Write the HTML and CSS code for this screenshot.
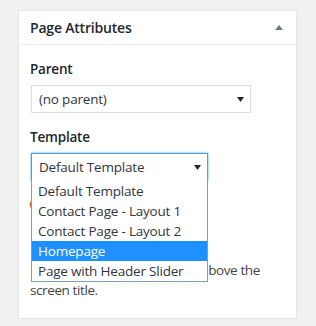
FILE: index.html
```html
<!DOCTYPE html>
<html lang="en">
<head>
    <meta charset="UTF-8">
    <title>Page Attributes</title>
    <link rel="stylesheet" href="styles.css">
</head>
<body>

<div class="postbox">
    <div class="postbox-header">
        <h2>Page Attributes</h2>
        <svg class="toggle" width="8" height="5" viewBox="0 0 8 5"><polygon points="4,0 8,5 0,5" /></svg>
    </div>
    <div class="inside">
        <p class="label">Parent</p>
        <div class="select parent-select">
            <span>(no parent)</span>
            <svg class="arrow" width="7" height="5" viewBox="0 0 7 5"><polygon points="0,0 7,0 3.5,5" /></svg>
        </div>

        <p class="label">Template</p>
        <div class="template-wrap">
            <div class="select template-select focused">
                <span>Default Template</span>
                <svg class="arrow" width="7" height="5" viewBox="0 0 7 5"><polygon points="0,0 7,0 3.5,5" /></svg>
            </div>
            <ul class="dropdown">
                <li>Default Template</li>
                <li>Contact Page - Layout 1</li>
                <li>Contact Page - Layout 2</li>
                <li class="active">Homepage</li>
                <li>Page with Header Slider</li>
            </ul>
        </div>

        <p class="order-label">Order</p>
        <p class="help">Need help? Use the Help tab above the screen title.</p>
    </div>
</div>

</body>
</html>
```

FILE: styles.css
```css
body {
    margin: 0;
    padding: 10px 19px 0 18px;
    background-color: #f1f1f1;
    font-family: "Open Sans", sans-serif;
    font-size: 13px;
    color: #23282d;
}
.postbox {
    background-color: #fff;
    border: 1px solid #e5e5e5;
    box-shadow: 0 1px 1px rgba(0, 0, 0, 0.04);
}
.postbox-header {
    display: flex;
    align-items: center;
    justify-content: space-between;
    height: 33px;
    padding: 0 12px 0 11px;
    border-bottom: 1px solid #eee;
}
.postbox-header h2 {
    margin: 0;
    font-size: 14px;
    font-weight: 600;
    letter-spacing: -0.2px;
}
.toggle {
    fill: #72777c;
    margin-right: 1px;
}
.inside {
    padding: 14px 11px 18px 11px;
}
.label {
    margin: 0;
    height: 20px;
    line-height: 20px;
    font-size: 13.5px;
    font-weight: 600;
    letter-spacing: -0.2px;
}
.select {
    display: flex;
    align-items: center;
    justify-content: space-between;
    box-sizing: border-box;
    height: 28px;
    margin-top: 6px;
    margin-left: 1px;
    padding: 0 6px 0 7px;
    border: 1px solid #ddd;
    font-size: 13.5px;
    color: #32373c;
    letter-spacing: -0.2px;
}
.arrow {
    fill: #23282d;
}
.parent-select {
    width: 220px;
    margin-bottom: 14px;
}
.template-wrap {
    position: relative;
    width: 177px;
    margin-left: 1px;
}
.template-select {
    width: 177px;
    margin-left: 0;
}
.focused {
    border-color: #5b9dd9;
    box-shadow: 0 0 2px rgba(30, 140, 190, 0.8);
}
.dropdown {
    position: absolute;
    top: 27px;
    left: 0;
    z-index: 2;
    box-sizing: border-box;
    width: 177px;
    margin: 0;
    padding: 1px 0 0 0;
    list-style: none;
    background-color: #fff;
    border: 1px solid #7f9db9;
    border-top: none;
    font-size: 13.5px;
    color: #32373c;
    letter-spacing: -0.2px;
}
.dropdown li {
    height: 20px;
    line-height: 20px;
    padding: 0 6px;
}
.dropdown li.active {
    background-color: #1e90ff;
    color: #fff;
}
.order-label {
    margin: 14px 0 0 -1px;
    font-size: 13.5px;
    color: #d54e21;
}
.help {
    margin: 47px 0 0 0;
    line-height: 20px;
    font-size: 13.5px;
    letter-spacing: -0.4px;
    color: #444;
}
```
